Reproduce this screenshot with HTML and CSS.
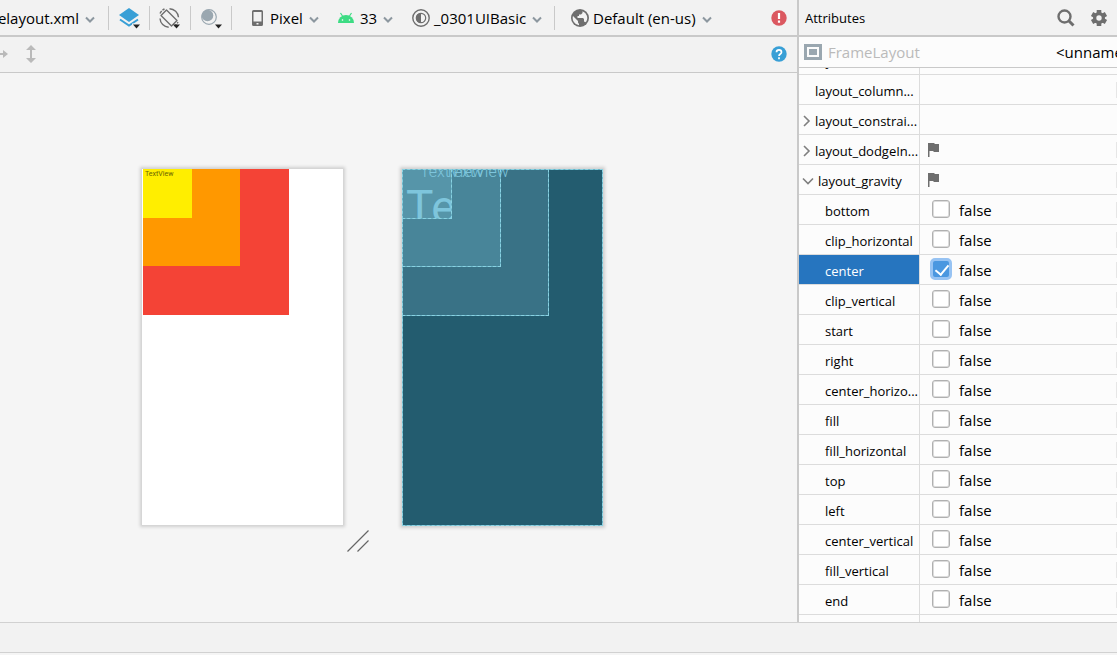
FILE: index.html
```html
<!DOCTYPE html>
<html lang="en">
<head>
<meta charset="utf-8">
<title>Layout Editor</title>
<link rel="stylesheet" href="styles.css">
</head>
<body>
<svg class="defs" aria-hidden="true">
  <symbol id="chev" viewBox="0 0 10 8"><path d="M1 1.500l4 4 4-4" fill="none" stroke="#8c979f" stroke-width="2"/></symbol>
  <symbol id="expand" viewBox="0 0 12 12"><path d="M2 1l5 5-5 5" fill="none" stroke="#7f7f7f" stroke-width="1.600"/></symbol>
  <symbol id="collapse" viewBox="0 0 12 12"><path d="M1 3.500l5 5 5-5" fill="none" stroke="#7f7f7f" stroke-width="1.600"/></symbol>
  <symbol id="flag" viewBox="0 0 12 14"><path d="M0 0h6l1 1h4v8H6L5 8H1.500v6H0z" fill="#6e6e6e"/></symbol>
</svg>
<div class="app">
  <main class="editor">
    <header class="toolbar">
      <button class="tool file">elayout.xml<svg class="chev"><use href="#chev"/></svg></button>
      <button class="tool icon" aria-label="Design surface"><svg width="21" height="22" viewBox="0 0 21 22"><path d="M10 0l10 7-10 7L0 7z" fill="#389fd6"/><path d="M1 11.500l9 6 9-6" fill="none" stroke="#389fd6" stroke-width="2"/><path d="M13 15.500h8v1.500l-3.500 3.500L13 17z" fill="#f2f2f2"/><path d="M14 16.500h7l-3.500 4z" fill="#222"/></svg></button>
      <button class="tool icon" aria-label="Orientation"><svg width="22" height="22" viewBox="0 0 22 22" fill="none" stroke="#6e6e6e" stroke-width="1.400"><path d="M7.500 2L18 12.500 12.500 18 2 7.500z" stroke-linejoin="round"/><path d="M10.500 0.700a9.300 9.300 0 0 1 9 8.600M1 10.500a9.300 9.300 0 0 0 8.700 8.800"/><path d="M1 5.500A9.300 9.300 0 0 1 5.500 1M15 18a9.300 9.300 0 0 0 4-4" stroke-dasharray="3 1"/><path d="M14 16.500h7l-3.500 4z" fill="#222" stroke="none"/></svg></button>
      <button class="tool icon" aria-label="Night mode"><svg width="21" height="22" viewBox="0 0 21 22"><circle cx="8" cy="9" r="7.300" fill="#f2f2f2" stroke="#9aa7b0" stroke-width="1.200"/><circle cx="6.500" cy="7.500" r="5.800" fill="#9aa7b0"/><path d="M14 16.500h7l-3.500 4z" fill="#222"/></svg></button>
      <button class="tool device"><svg width="12" height="16" viewBox="0 0 12 16"><path fill="#6e6e6e" fill-rule="evenodd" d="M1.500 0h8A1.500 1.500 0 0 1 11 1.500v13a1.500 1.500 0 0 1-1.500 1.500h-8A1.500 1.500 0 0 1 0 14.500v-13A1.500 1.500 0 0 1 1.500 0zM1.500 2v9.500h8V2zM4.500 13v1.500h2V13z"/></svg>Pixel<svg class="chev"><use href="#chev"/></svg></button>
      <button class="tool api"><svg width="16" height="12" viewBox="0 0 16 12"><path d="M0 11a8 8 0 0 1 16 0z" fill="#3ddc84"/><path d="M2.500 1l2 3M13.500 1l-2 3" stroke="#3ddc84" stroke-width="1.200"/><circle cx="4.500" cy="8" r=".8" fill="#fff"/><circle cx="11.500" cy="8" r=".8" fill="#fff"/></svg>33<svg class="chev"><use href="#chev"/></svg></button>
      <button class="tool theme"><svg width="18" height="18" viewBox="0 0 18 18"><circle cx="9" cy="9" r="8.200" fill="none" stroke="#6e6e6e" stroke-width="1.400"/><circle cx="9" cy="9" r="4.700" fill="none" stroke="#6e6e6e" stroke-width="1.200"/><path d="M9 4a5 5 0 0 0 0 10z" fill="#6e6e6e"/></svg>_0301UIBasic<svg class="chev"><use href="#chev"/></svg></button>
      <button class="tool locale"><svg width="18" height="18" viewBox="0 0 18 18"><circle cx="9" cy="9" r="9" fill="#6e6e6e"/><path d="M2 7l5 5v1.500L8 15v1.300A7.300 7.300 0 0 1 2 7zM11.500 2.200a7.300 7.300 0 0 1 3.400 11L14 12.700h-1V10l-1-1H6.500V7H8V5.500h2l1.500-1.500z" fill="#f2f2f2"/></svg>Default (en-us)<svg class="chev"><use href="#chev"/></svg></button>
      <button class="status" aria-label="Errors"><svg width="16" height="16" viewBox="0 0 16 16"><circle cx="8" cy="8" r="7.700" fill="#db5860"/><path d="M8 3v6M8 10.500v2.200" stroke="#fff" stroke-width="2.200"/></svg></button>
    </header>
    <div class="subbar">
      <svg width="8" height="12" viewBox="0 0 8 12"><path d="M0 5h3V2l5 4-5 4V7H0z" fill="#bababa"/></svg>
      <svg width="10" height="18" viewBox="0 0 10 18"><path d="M5 0l5 5H6v8h4l-5 5-5-5h4V5H0z" fill="#bababa"/></svg>
      <button class="status" aria-label="Help"><svg width="16" height="16" viewBox="0 0 16 16"><circle cx="8" cy="8" r="7.700" fill="#389fd6"/><path d="M5.500 6.300c0-3.200 5-3.200 5 0 0 1.700-2.500 1.700-2.500 3.700M8 11.300v1.900" fill="none" stroke="#fff" stroke-width="1.700"/></svg></button>
    </div>
    <section class="surface" aria-label="Design surface">
      <div class="screen design">
        <div class="box red"></div>
        <div class="box orange"></div>
        <div class="box yellow">TextView</div>
        <svg class="grip" width="22" height="22" viewBox="0 0 22 22"><path d="M0.500 21.500l21-21M10.500 21.500l11-11" stroke="#666" stroke-width="1.200"/></svg>
      </div>
      <div class="screen blueprint">
        <div class="box red"></div>
        <div class="box orange"></div>
        <div class="box yellow"><span class="label big">TextView</span></div>
        <div class="labels"><span class="label near">TextView</span><span class="label far">TextView</span></div>
      </div>
    </section>
  </main>
  <aside class="panel">
    <header class="panel-head"><h1>Attributes</h1>
      <button aria-label="Search"><svg width="18" height="18" viewBox="0 0 18 18" fill="none" stroke="#6e6e6e"><circle cx="7.500" cy="7.500" r="6" stroke-width="2.400"/><path d="M11.500 11.500l5 5" stroke-width="3"/></svg></button>
      <button aria-label="Settings"><svg width="18" height="18" viewBox="-9 -9 18 18"><g fill="#6e6e6e"><circle r="6"/><path id="t" d="M-2.300-8h4.600v16h-4.600z"/><use href="#t" transform="rotate(60)"/><use href="#t" transform="rotate(120)"/></g><circle r="2.700" fill="#f2f2f2"/></svg></button>
    </header>
    <div class="component"><svg width="18" height="16" viewBox="0 0 18 16"><path d="M1.500 1.500h15v13h-15z" fill="none" stroke="#9aa7b0" stroke-width="3"/><path d="M5 5h8v6H5z" fill="#9aa7b0"/></svg><span class="type">FrameLayout</span><span class="id">&lt;unnamed&gt;</span></div>
    <div class="scroll">
      <table>
        <tbody>
          <tr><th class="plain">layout_behavi...</th><td></td></tr>
          <tr><th class="plain">layout_column...</th><td><div class="val"></div></td></tr>
          <tr><th><svg class="arrow"><use href="#expand"/></svg>layout_constrai...</th><td></td></tr>
          <tr><th><svg class="arrow"><use href="#expand"/></svg>layout_dodgeIn...</th><td><div class="val"><svg class="flag"><use href="#flag"/></svg></div></td></tr>
          <tr><th class="open"><svg class="arrow"><use href="#collapse"/></svg>layout_gravity</th><td><div class="val"><svg class="flag"><use href="#flag"/></svg></div></td></tr>
          <tr><th class="sub">bottom</th><td><label class="val"><input type="checkbox">false</label></td></tr>
          <tr><th class="sub">clip_horizontal</th><td><label class="val"><input type="checkbox">false</label></td></tr>
          <tr class="selected"><th class="sub">center</th><td><label class="val"><input type="checkbox" checked>false</label></td></tr>
          <tr><th class="sub">clip_vertical</th><td><label class="val"><input type="checkbox">false</label></td></tr>
          <tr><th class="sub">start</th><td><label class="val"><input type="checkbox">false</label></td></tr>
          <tr><th class="sub">right</th><td><label class="val"><input type="checkbox">false</label></td></tr>
          <tr><th class="sub">center_horizo...</th><td><label class="val"><input type="checkbox">false</label></td></tr>
          <tr><th class="sub">fill</th><td><label class="val"><input type="checkbox">false</label></td></tr>
          <tr><th class="sub">fill_horizontal</th><td><label class="val"><input type="checkbox">false</label></td></tr>
          <tr><th class="sub">top</th><td><label class="val"><input type="checkbox">false</label></td></tr>
          <tr><th class="sub">left</th><td><label class="val"><input type="checkbox">false</label></td></tr>
          <tr><th class="sub">center_vertical</th><td><label class="val"><input type="checkbox">false</label></td></tr>
          <tr><th class="sub">fill_vertical</th><td><label class="val"><input type="checkbox">false</label></td></tr>
          <tr><th class="sub">end</th><td><label class="val"><input type="checkbox">false</label></td></tr>
          <tr><th></th><td></td></tr>
        </tbody>
      </table>
    </div>
  </aside>
</div>
<footer class="statusbar"></footer>
</body>
</html>
```
FILE: styles.css
```css
* { box-sizing: border-box; }
html, body { height: 100%; }
body {
  margin: 0;
  display: flex;
  flex-direction: column;
  overflow: hidden;
  background: #f5f5f5;
  color: #000;
  font: 15px/20px "Open Sans", "Noto Sans", sans-serif;
}
button {
  display: flex;
  align-items: center;
  padding: 0;
  border: 0;
  background: none;
  color: inherit;
  font: inherit;
}
svg { flex: none; }
.defs { position: absolute; width: 0; height: 0; }
.app { flex: 1; min-height: 0; display: flex; }
.editor { flex: 1; min-width: 0; display: flex; flex-direction: column; }

.toolbar {
  display: flex;
  align-items: center;
  height: 37px;
  padding-right: 10px;
  border-bottom: 2px solid #c9c9c9;
  background: #f2f2f2;
}
.tool { height: 24px; white-space: nowrap; }
.chev { width: 10px; height: 8px; margin: 4px 0 0 6px; }
.file { width: 109px; padding-right: 13px; justify-content: flex-end; border-right: 1px solid #c9c9c9; }
.icon { width: 41px; padding-top: 2px; justify-content: center; border-right: 1px solid #c9c9c9; }
.device { width: 106px; padding-left: 20px; }
.device svg:first-child, .api svg:first-child { margin-right: 6px; }
.api { width: 74px; }
.theme { width: 143px; border-right: 1px solid #c9c9c9; }
.theme svg:first-child, .locale svg:first-child { margin-right: 4px; }
.locale { padding-left: 16px; }
.status { margin-left: auto; }

.subbar {
  display: flex;
  align-items: center;
  gap: 18px;
  height: 36px;
  padding: 0 10px 1px 0;
  border-bottom: 1px solid #c9c9c9;
  background: #f2f2f2;
}

.surface {
  flex: 1;
  display: flex;
  align-items: flex-start;
  gap: 59px;
  padding: 96px 0 0 142px;
  background: #f5f5f5;
}
.screen { position: relative; width: 201px; height: 356px; box-shadow: 0 0 3px 2px #cfcfcf; }
.box { position: absolute; top: 0; left: 1px; overflow: hidden; }
.box.red { width: 146px; height: 146px; }
.box.orange { width: 97px; height: 97px; }
.box.yellow { width: 49px; height: 49px; }
.design { background: #fff; }
.design .red { background: #f44336; }
.design .orange { background: #ff9800; }
.design .yellow { padding-left: 2px; background: #ffee00; color: #6b6500; font: 7px/10px "Roboto", sans-serif; }
.grip { position: absolute; left: 205px; top: 361px; }
.blueprint, .blueprint .box { border: 1px solid #69b3c6; outline: 1px dashed #8ad2e2; outline-offset: -1px; }
.blueprint { height: 357px; background: #235c6f; }
.blueprint .box { top: -1px; left: -1px; color: #7ec5dc; }
.blueprint .red { width: 147px; height: 147px; background: #397286; }
.blueprint .orange { width: 99px; height: 98px; background: #488599; }
.blueprint .yellow { width: 50px; height: 50px; background: #5695a9; }
.labels { position: absolute; inset: 0; overflow: hidden; color: #7ec5dc; }
.label { position: absolute; top: -7px; font: 300 16px/18px "Roboto", sans-serif; }
.label.near { left: 17px; }
.label.far { left: 42px; }
.label.big { left: 3px; top: 10px; font: 46px/54px "Roboto", sans-serif; }

.panel {
  flex: 0 0 320px;
  display: flex;
  flex-direction: column;
  min-width: 0;
  overflow: hidden;
  border-left: 2px solid #c9c9c9;
  background: #fcfcfc;
}
.panel-head {
  flex: none;
  display: flex;
  align-items: center;
  gap: 15px;
  height: 37px;
  padding: 0 9px 0 6px;
  border-bottom: 2px solid #c9c9c9;
  background: #f2f2f2;
}
.panel-head h1 { flex: 1; margin: 0; font-size: 13px; font-weight: 400; }
.component {
  flex: none;
  display: flex;
  align-items: center;
  height: 31px;
  padding-left: 5px;
  border-bottom: 1px solid #c9c9c9;
  white-space: nowrap;
}
.type { flex: none; width: 228px; margin-left: 6px; color: #bababa; }
.scroll { flex: 1; min-height: 0; overflow: hidden; }
table { width: 100%; margin-top: -23px; border-collapse: separate; border-spacing: 0; table-layout: fixed; }
th, td { height: 30px; padding: 0; border-bottom: 1px solid #dcdcdc; white-space: nowrap; }
th { width: 121px; padding: 2px 0 0 3px; border-right: 1px solid #dcdcdc; font-size: 13px; font-weight: 400; line-height: 20px; text-align: left; }
.plain { padding-left: 16px; }
.sub { padding-left: 26px; }
.arrow { width: 12px; height: 12px; margin-right: 1px; vertical-align: -1px; }
.open .arrow { margin-right: 4px; }
.selected th { background: #2675bf; color: #fff; }
.val { display: flex; align-items: center; height: 29px; padding-left: 12px; }
.val::after { content: ""; width: 1px; height: 16px; margin-left: auto; background: #e6e6e6; }
.flag { width: 12px; height: 14px; margin-left: -4px; }
input {
  appearance: none;
  width: 18px;
  height: 18px;
  margin: 0 9px 2px 0;
  border: 1px solid #b0b0b0;
  border-radius: 3px;
  background: #fff;
  box-shadow: inset 0 0 0 1px #dcdcdc;
}
input:checked { border-color: #4a97e0; background: #4a97e0; box-shadow: none; outline: 3px solid #97c3f3; outline-offset: -1px; position: relative; }
input:checked::after {
  content: "";
  position: absolute;
  left: 5px;
  top: 1px;
  width: 6px;
  height: 11px;
  border: solid #fff;
  border-width: 0 2px 2px 0;
  transform: rotate(40deg);
}

.statusbar {
  flex: none;
  height: 31px;
  margin-bottom: 2px;
  border-top: 1px solid #d1d1d1;
  border-bottom: 1px solid #d1d1d1;
  background: #f2f2f2;
}
```
